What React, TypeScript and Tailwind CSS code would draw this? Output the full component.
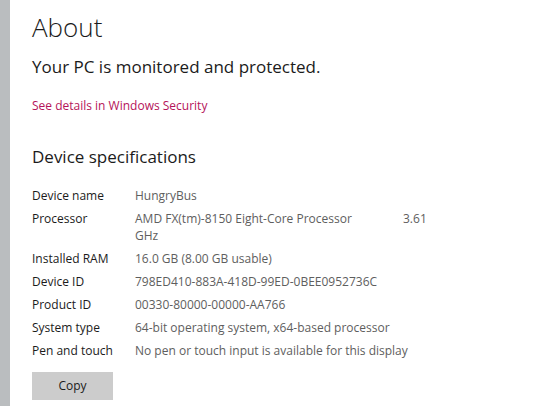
import React from 'react';

type Spec = {
  label: string;
  value: React.ReactNode;
};

const specs: Spec[] = [
  { label: 'Device name', value: 'HungryBus' },
  {
    label: 'Processor',
    value: (
      <>
        <span className="flex">
          <span className="w-[268px]">AMD FX(tm)-8150 Eight-Core Processor</span>
          <span>3.61</span>
        </span>
        <span className="block">GHz</span>
      </>
    ),
  },
  { label: 'Installed RAM', value: '16.0 GB (8.00 GB usable)' },
  { label: 'Device ID', value: '798ED410-883A-418D-99ED-0BEE0952736C' },
  { label: 'Product ID', value: '00330-80000-00000-AA766' },
  { label: 'System type', value: '64-bit operating system, x64-based processor' },
  { label: 'Pen and touch', value: 'No pen or touch input is available for this display' },
];

export default function App() {
  return (
    <div className="flex h-[406px] w-[540px] overflow-hidden bg-white font-['Open_Sans',sans-serif] text-[#1b1b1b]">
      <div className="w-[10px] shrink-0 bg-[#babdbf]" />
      <div className="flex flex-col pl-[22px] pt-[10px]">
        <h1 className="text-[26px] font-light leading-[34px]">About</h1>
        <p className="mt-[11px] text-[17px] leading-[24px]">Your PC is monitored and protected.</p>
        <a className="mt-[18px] text-[12px] leading-[18px] text-[#b5135a]">See details in Windows Security</a>

        <h2 className="mt-[29px] text-[17px] leading-[26px]">Device specifications</h2>
        <div className="mt-[17px] flex flex-col gap-[6px] text-[12px] leading-[17px]">
          {specs.map((s) => (
            <div key={s.label} className="flex">
              <span className="w-[103px] shrink-0">{s.label}</span>
              <span className="text-[#5e5e5e]">{s.value}</span>
            </div>
          ))}
        </div>

        <button
          type="button"
          className="mt-[13px] h-[28px] w-[81px] bg-[#cccccc] text-[12px] text-[#1b1b1b]"
        >
          Copy
        </button>
      </div>
    </div>
  );
}
